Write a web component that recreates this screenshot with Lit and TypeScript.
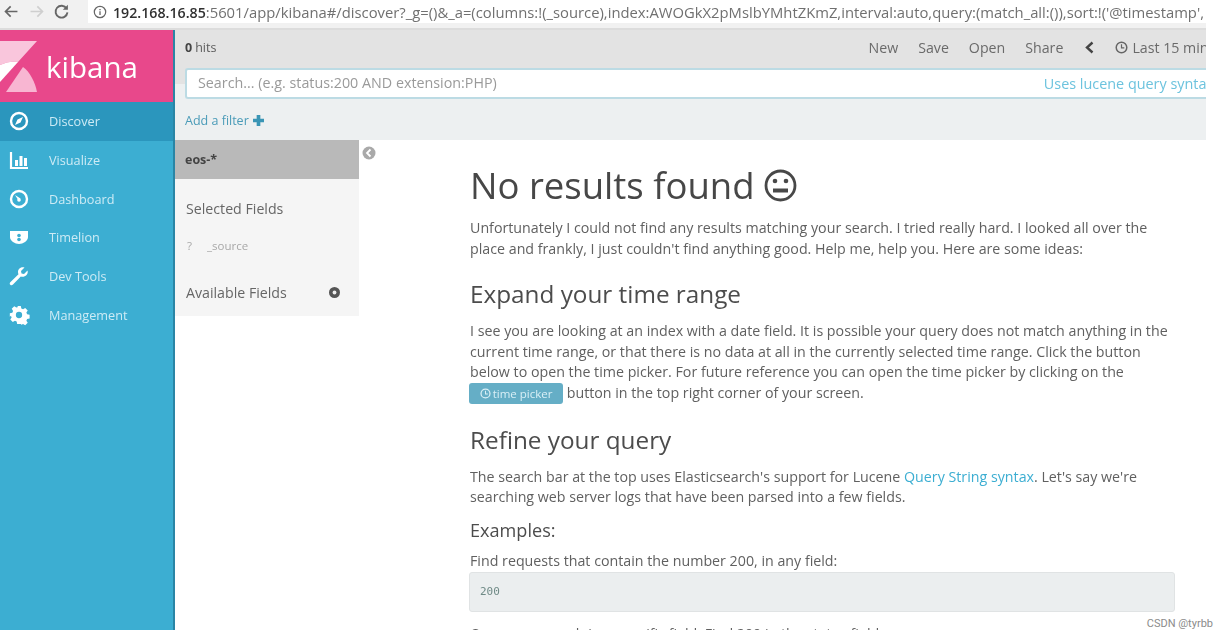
import { LitElement, html, css, svg } from "lit";
import { customElement } from "lit/decorators.js";

const icons: Record<string, unknown> = {
  discover: svg`<circle cx="10" cy="10" r="8" fill="none" stroke="#fff" stroke-width="2.4"/><path d="M14 6 L11.5 11.5 L6 14 L8.5 8.500 Z" fill="#fff"/>`,
  visualize: svg`<path d="M2 2 V18 H19" fill="none" stroke="#fff" stroke-width="2.2"/><path d="M6 10h3v6H6zM10.500 6h3v10h-3zM15 8h3v8h-3z" fill="#fff"/>`,
  dashboard: svg`<circle cx="10" cy="10" r="8" fill="none" stroke="#fff" stroke-width="2.4"/><path d="M6 6 L11.500 9.500 L9.500 11.500 Z" fill="#fff"/><circle cx="10" cy="11" r="1.800" fill="#fff"/>`,
  timelion: svg`<path d="M1 4 H19 V10 C19 14 14 17 10 17 C6 17 1 14 1 10 Z" fill="#fff"/><circle cx="10" cy="8.500" r="1.800" fill="#3caed2"/><circle cx="10" cy="12.500" r="1.800" fill="#3caed2"/>`,
  wrench: svg`<path d="M18.500 4.500 L15 8 L12.500 7.500 L12 5 L15.500 1.500 C12.500 0.500 9 2.500 9 6 C9 7 9.200 7.500 9.500 8.200 L1.500 16 C0.500 17 0.500 18 1.300 18.800 C2.100 19.600 3.100 19.500 4 18.600 L11.800 10.600 C15.500 11.800 19.800 8.500 18.500 4.500 Z" fill="#fff"/>`,
  gear: svg`<g transform="translate(1 1) scale(.9)"><path fill-rule="evenodd" d="M8 0h4l.6 2.800 1.900.8 2.400-1.500 2.800 2.800-1.500 2.400.8 1.900 2.800.6v4l-2.800.6-.8 1.900 1.500 2.400-2.800 2.800-2.400-1.500-1.900.8L12 20H8l-.6-2.800-1.900-.8-2.400 1.500-2.800-2.800 1.500-2.400-.8-1.900L-.2 12V8l2.800-.6.8-1.900-1.500-2.400 2.800-2.800 2.400 1.500 1.900-.8Z M10 6.500a3.500 3.500 0 1 0 0 7 3.500 3.500 0 0 0 0-7Z" fill="#fff"/></g>`,
};

const nav = [
  ["discover", "Discover"],
  ["visualize", "Visualize"],
  ["dashboard", "Dashboard"],
  ["timelion", "Timelion"],
  ["wrench", "Dev Tools"],
  ["gear", "Management"],
];

@customElement("app-root")
export class AppRoot extends LitElement {
  static styles = css`
    :host { display: block; width: 1228px; height: 640px; background: #fff; overflow: hidden; position: relative; font-family: "Open Sans", sans-serif; color: #5c5c5c; }
    .frame { width: 1206px; height: 630px; overflow: hidden; display: flex; flex-direction: column; filter: blur(0.75px); background: #fff; }
    .chrome { height: 28px; flex: none; background: #f1f1f1; display: flex; align-items: center; border-bottom: 2px solid #dcdcdc; }
    .navs { width: 88px; flex: none; display: flex; align-items: center; padding-left: 3px; gap: 8px; box-sizing: border-box; margin-top: -6px; }
    .navs svg { width: 17px; height: 17px; flex: none; }
    .url { flex: 1; min-width: 0; height: 23px; background: #fff; display: flex; align-items: center; gap: 6px; padding: 0 0 0 5px; font-size: 14.8px; color: #707070; white-space: nowrap; overflow: hidden; margin-top: -5px; }
    .url svg { width: 14px; height: 14px; flex: none; }
    .url b { font-weight: 600; color: #303030; font-size: 14.2px; }
    .body { flex: 1; min-height: 0; display: flex; }
    .side { width: 175px; flex: none; background: #3caed2; border-right: 2px solid #2a85a5; box-sizing: border-box; display: flex; flex-direction: column; }
    .logo { height: 72px; flex: none; background: #e8488b; display: flex; align-items: center; gap: 8px; }
    .logo svg { width: 38px; height: 52px; flex: none; }
    .logo span { font-size: 29.5px; color: #fff; }
    .item { height: 38.7px; flex: none; display: flex; align-items: center; color: #cdebf5; font-size: 12.7px; }
    .item.on { background: #2b96bd; }
    .item svg { width: 20px; height: 20px; margin-left: 9px; margin-right: 20px; flex: none; overflow: visible; }
    .main { flex: 1; min-width: 0; display: flex; flex-direction: column; }
    .top { height: 38px; box-sizing: border-box; padding-bottom: 4px; flex: none; background: #e3e3e3; display: flex; align-items: center; padding-left: 10px; font-size: 12.5px; white-space: nowrap; overflow: hidden; }
    .top b { color: #444; margin-right: 3px; }
    .menu { margin-left: auto; display: flex; align-items: center; gap: 20px; font-size: 14.2px; color: #6a6a6a; margin-right: -31px; }
    .menu svg { width: 11px; height: 13px; }
    .menu .chev { margin-left: 1px; }
    .clock { display: flex; align-items: center; gap: 4px; }
    .clock svg { width: 13px; height: 13px; }
    .searchwrap { flex: none; height: 31px; padding-left: 10px; background: linear-gradient(#e3e3e3 50%, #edf0f1 50%); }
    .search { height: 31px; box-sizing: border-box; background: #fff; border: 2px solid #bcdbe4; border-right: none; border-radius: 3px 0 0 3px; display: flex; align-items: center; padding: 0 0 3px 11px; font-size: 14.3px; color: #9a9a9a; white-space: nowrap; overflow: hidden; }
    .search a { margin-left: auto; color: #6cc3de; font-size: 14.4px; margin-right: -8px; padding-top: 2px; }
    .filter { height: 41px; flex: none; background: #edf0f1; box-sizing: border-box; padding: 1px 0 0 10px; display: flex; align-items: center; gap: 4px; font-size: 12.5px; color: #4a9bb8; }
    .filter svg { width: 11px; height: 11px; }
    .lower { flex: 1; min-height: 0; display: flex; overflow: hidden; }
    .fields { width: 184px; height: 176px; flex: none; background: #f5f5f5; display: flex; flex-direction: column; }
    .idx { height: 39px; flex: none; background: #b9b9b9; display: flex; align-items: center; padding-left: 10px; font-weight: 700; font-size: 12.5px; color: #444; }
    .lab { font-size: 14.2px; color: #666; padding-left: 11px; }
    .lab.sel { margin-top: 20px; }
    .src { margin-top: 20px; padding-left: 12px; font-size: 11.5px; color: #a8a8a8; display: flex; gap: 15px; }
    .avail { margin-top: 30px; display: flex; align-items: center; justify-content: space-between; padding: 0 19px 0 11px; }
    .avail svg { width: 11px; height: 11px; }
    .toggle { width: 14px; height: 14px; flex: none; margin: 6px 0 0 3px; }
    .content { width: 705px; flex: none; margin-left: 94px; box-sizing: border-box; padding-top: 23px; font-size: 14.24px; line-height: 20.5px; color: #606060; }
    h1 { margin: 0; font-weight: 400; font-size: 36.5px; line-height: 44px; color: #474747; display: flex; align-items: center; gap: 9px; white-space: nowrap; }
    h1 svg { width: 33px; height: 33px; flex: none; }
    h2 { margin: 0; font-weight: 400; font-size: 24.3px; line-height: 30px; color: #4c4c4c; white-space: nowrap; }
    h3 { margin: 0; font-weight: 400; font-size: 18.1px; line-height: 22px; color: #4c4c4c; white-space: nowrap; }
    p { margin: 0; white-space: nowrap; }
    .p1 { margin-top: 11px; }
    .h-exp { margin-top: 20px; }
    .p2 { margin-top: 12px; }
    .btn { display: inline-flex; align-items: center; gap: 2px; height: 21px; width: 94px; justify-content: center; box-sizing: border-box; background: #65aec6; color: #d9eff6; border-radius: 3px; font-size: 11.500px; line-height: 21px; vertical-align: top; margin: 0 0 0 -1px; }
    .btn svg { width: 11px; height: 11px; }
    .h-ref { margin-top: 21px; }
    .p3 { margin-top: 12px; }
    .p3 a { color: #3caed2; }
    .h-ex { margin-top: 11px; }
    .p4 { margin-top: 10px; }
    pre { margin: 1px 0 0 -1px; height: 40px; box-sizing: border-box; background: #ebeeef; border: 1px solid #e0e3e4; border-radius: 3px; display: flex; align-items: center; padding-left: 10px; font-family: "DejaVu Sans Mono", monospace; font-size: 11px; color: #6f8a86; }
    .p5 { margin-top: 12px; }
    .mark { position: absolute; right: 15px; bottom: 9px; font-family: Roboto, "Liberation Sans", sans-serif; font-size: 11px; line-height: 14px; color: #8b8b8b; }
  `;

  render() {
    return html`
      <div class="frame">
        <div class="chrome">
          <div class="navs">
            <svg viewBox="0 0 20 20"><path d="M17 10H4M9 4l-6 6 6 6" fill="none" stroke="#666" stroke-width="2"/></svg>
            <svg viewBox="0 0 20 20"><path d="M3 10h13M11 4l6 6-6 6" fill="none" stroke="#cfcfcf" stroke-width="2"/></svg>
            <svg viewBox="0 0 20 20"><path d="M16 6.500A7 7 0 1 0 17 11" fill="none" stroke="#666" stroke-width="2.200"/><path d="M17.500 2v6h-6z" fill="#666"/></svg>
          </div>
          <div class="url">
            <svg viewBox="0 0 16 16"><circle cx="8" cy="8" r="6.500" fill="none" stroke="#666" stroke-width="1.400"/><path d="M8 7v4.500M8 4.500v1.500" stroke="#666" stroke-width="1.500"/></svg>
            <span><b>192.168.16.85</b>:5601/app/kibana#/discover?_g=()&amp;_a=(columns:!(_source),index:AWOGkX2pMslbYMhtZKmZ,interval:auto,query:(match_all:()),sort:!('@timestamp',</span>
          </div>
        </div>
        <div class="body">
          <div class="side">
            <div class="logo">
              <svg viewBox="0 0 38 52">
                <path d="M0 1H37L18 22C12 21 6 22 0 25Z" fill="#f9c6dc"/>
                <path d="M0 25C6 22 12 21 18 22L0 42Z" fill="#fff"/>
                <path d="M23 27C30 32 35 42 37 52H6Z" fill="#f8b6d2"/>
              </svg>
              <span>kibana</span>
            </div>
            ${nav.map(
              ([ic, label], i) => html`<div class="item ${i === 0 ? "on" : ""}"><svg viewBox="0 0 20 20">${icons[ic]}</svg><span>${label}</span></div>`
            )}
          </div>
          <div class="main">
            <div class="top">
              <span><b>0</b>hits</span>
              <div class="menu">
                <span>New</span><span>Save</span><span>Open</span><span>Share</span>
                <svg class="chev" viewBox="0 0 11 13"><path d="M8.500 1.500L3 6.500l5.500 5" fill="none" stroke="#444" stroke-width="2.400"/></svg>
                <span class="clock"><svg viewBox="0 0 14 14"><circle cx="7" cy="7" r="5.700" fill="none" stroke="#666" stroke-width="1.600"/><path d="M7 3.500V7.500H10" fill="none" stroke="#666" stroke-width="1.300"/></svg>Last 15 minutes</span>
              </div>
            </div>
            <div class="searchwrap">
              <div class="search"><span>Search... (e.g. status:200 AND extension:PHP)</span><a>Uses lucene query syntax</a></div>
            </div>
            <div class="filter">
              <span>Add a filter</span>
              <svg viewBox="0 0 12 12"><path d="M4 0h4v4h4v4H8v4H4V8H0V4h4z" fill="#3a95b5"/></svg>
            </div>
            <div class="lower">
              <div class="fields">
                <div class="idx">eos-*</div>
                <div class="lab sel">Selected Fields</div>
                <div class="src"><span>?</span><span>_source</span></div>
                <div class="lab avail"><span>Available Fields</span>
                  <svg viewBox="0 0 20 20"><circle cx="10" cy="10" r="10" fill="#555"/><circle cx="10" cy="10" r="3.500" fill="#eee"/></svg>
                </div>
              </div>
              <svg class="toggle" viewBox="0 0 14 14"><circle cx="7" cy="7" r="6.500" fill="#a9a9a9"/><path d="M8.500 3.500L5 7l3.500 3.500" fill="none" stroke="#fff" stroke-width="1.800"/></svg>
              <div class="content">
                <h1>No results found
                  <svg viewBox="0 0 33 33"><circle cx="16.500" cy="16.500" r="14.500" fill="none" stroke="#484848" stroke-width="2.800"/><circle cx="11" cy="12" r="2.300" fill="#484848"/><circle cx="22" cy="12" r="2.300" fill="#484848"/><rect x="9" y="19.500" width="15" height="4" fill="#484848"/></svg>
                </h1>
                <p class="p1">Unfortunately I could not find any results matching your search. I tried really hard. I looked all over the<br />place and frankly, I just couldn't find anything good. Help me, help you. Here are some ideas:</p>
                <h2 class="h-exp">Expand your time range</h2>
                <p class="p2">I see you are looking at an index with a date field. It is possible your query does not match anything in the<br />current time range, or that there is no data at all in the currently selected time range. Click the button<br />below to open the time picker. For future reference you can open the time picker by clicking on the<br /><span class="btn"><svg viewBox="0 0 14 14"><circle cx="7" cy="7" r="5.700" fill="none" stroke="#d9eff6" stroke-width="1.600"/><path d="M7 3.500V7.500H10" fill="none" stroke="#d9eff6" stroke-width="1.300"/></svg>time picker</span> button in the top right corner of your screen.</p>
                <h2 class="h-ref">Refine your query</h2>
                <p class="p3">The search bar at the top uses Elasticsearch's support for Lucene <a>Query String syntax</a>. Let's say we're<br />searching web server logs that have been parsed into a few fields.</p>
                <h3 class="h-ex">Examples:</h3>
                <p class="p4">Find requests that contain the number 200, in any field:</p>
                <pre>200</pre>
                <p class="p5">Or we can search in a specific field. Find 200 in the status field:</p>
              </div>
            </div>
          </div>
        </div>
      </div>
      <div class="mark">CSDN @tyrbb</div>
    `;
  }
}
